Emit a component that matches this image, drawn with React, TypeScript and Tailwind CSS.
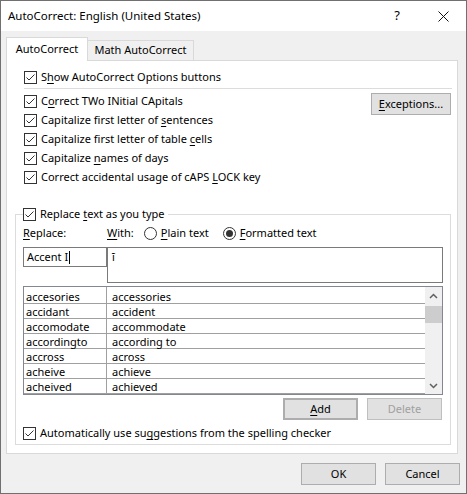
import React from 'react';

const rows = [
  ['accesories', 'accessories'],
  ['accidant', 'accident'],
  ['accomodate', 'accommodate'],
  ['accordingto', 'according to'],
  ['accross', 'across'],
  ['acheive', 'achieve'],
  ['acheived', 'achieved'],
];

function U({ children }: { children: React.ReactNode }) {
  return <span className="underline underline-offset-[2px] decoration-[1px]">{children}</span>;
}

function Check() {
  return (
    <span className="w-[13px] h-[13px] shrink-0 border border-[#333333] bg-white flex items-center justify-center">
      <svg width="11" height="11" viewBox="0 0 11 11">
        <path d="M1.5 5.5 L4 8 L9.5 2.5" fill="none" stroke="#333333" strokeWidth="1" />
      </svg>
    </span>
  );
}

function Radio({ on }: { on?: boolean }) {
  return (
    <span className="w-[13px] h-[13px] shrink-0 rounded-full border border-[#333333] bg-white flex items-center justify-center">
      {on && <span className="w-[7px] h-[7px] rounded-full bg-[#333333]" />}
    </span>
  );
}

function CheckRow({ children }: { children: React.ReactNode }) {
  return (
    <div className="flex items-center h-[19px] gap-[4px]">
      <Check />
      <span className="whitespace-nowrap">{children}</span>
    </div>
  );
}

function Btn({ children, className = '' }: { children: React.ReactNode; className?: string }) {
  return (
    <div className={`w-[75px] h-[22px] shrink-0 flex items-center justify-center bg-[#e1e1e1] border border-[#adadad] ${className}`}>
      {children}
    </div>
  );
}

export default function App() {
  return (
    <div className="w-[467px] h-[494px] border border-[#707070] flex flex-col font-['Noto_Sans',sans-serif] text-[11px] text-black overflow-hidden">
      {/* title bar */}
      <div className="h-[30px] shrink-0 bg-white flex items-center justify-between pl-[7px] pr-[17px]">
        <span className="text-[11.5px]">AutoCorrect: English (United States)</span>
        <div className="flex items-center gap-[38px]">
          <span className="text-[13px]">?</span>
          <svg width="11" height="11" viewBox="0 0 11 11">
            <path d="M0.5 0.5 L10.5 10.5 M10.5 0.5 L0.5 10.5" stroke="#111" strokeWidth="1" />
          </svg>
        </div>
      </div>

      {/* body */}
      <div className="flex-1 bg-[#f0f0f0] pl-[5px] pr-[6px] pt-[6px] flex flex-col">
        <div className="relative z-10 flex items-end h-[24px] -mb-px">
          <div className="w-[82px] h-[24px] bg-white border border-b-0 border-[#d9d9d9] flex items-center justify-center">
            AutoCorrect
          </div>
          <div className="w-[106px] h-[21px] border border-l-0 border-[#d9d9d9] flex items-center justify-center">
            Math AutoCorrect
          </div>
        </div>

        <div className="w-[452px] bg-white border border-[#d9d9d9] pt-[7px] pb-[8px] flex flex-col">
          <div className="pl-[17px]">
            <CheckRow>
              S<U>h</U>ow AutoCorrect Options buttons
            </CheckRow>
          </div>
          <div className="h-px bg-[#dcdcdc] mt-[1px] ml-[17px] mr-[5px]" />

          <div className="flex mt-[3px] pl-[17px] pr-[6px]">
            <div className="flex-1 flex flex-col">
              <CheckRow>
                C<U>o</U>rrect TWo INitial CApitals
              </CheckRow>
              <CheckRow>
                Capitalize first letter of <U>s</U>entences
              </CheckRow>
              <CheckRow>
                Capitalize first letter of table <U>c</U>ells
              </CheckRow>
              <CheckRow>
                Capitalize <U>n</U>ames of days
              </CheckRow>
              <CheckRow>
                Correct accidental usage of cAPS <U>L</U>OCK key
              </CheckRow>
            </div>
            <div className="w-[80px] h-[22px] mt-[1px] flex items-center justify-center bg-[#e1e1e1] border border-[#adadad]">
              <span>
                <U>E</U>xceptions...
              </span>
            </div>
          </div>

          {/* replace group */}
          <div className="relative mt-[27px] ml-[8px] mr-[6px] border border-[#dcdcdc] pt-[9px] pb-[1px] pl-[7px] pr-[7px] flex flex-col">
            <div className="absolute -top-[10px] left-[7px] bg-white pr-[3px]">
              <CheckRow>
                Replace <U>t</U>ext as you type
              </CheckRow>
            </div>

            <div className="flex items-center h-[19px]">
              <span className="w-[84px]">
                <U>R</U>eplace:
              </span>
              <span>
                <U>W</U>ith:
              </span>
              <span className="ml-[10px] flex items-center gap-[4px]">
                <Radio />
                <span>
                  <U>P</U>lain text
                </span>
              </span>
              <span className="ml-[14px] flex items-center gap-[4px]">
                <Radio on />
                <span>
                  <U>F</U>ormatted text
                </span>
              </span>
            </div>

            <div className="flex mt-[4px] items-start">
              <div className="w-[84px] h-[20px] border border-[#7a7a7a] flex items-center pl-[3px]">
                <span>Accent I</span>
                <span className="w-px h-[13px] bg-black ml-[1px]" />
              </div>
              <div className="flex-1 h-[36px] border border-[#7a7a7a] pl-[4px] pt-[1px] leading-[16px]">ĭ</div>
            </div>

            <div className="mt-[3px] h-[109px] border border-[#828790] flex">
              <div className="relative flex-1 pt-[2px]">
                <div className="absolute top-0 bottom-0 left-[82px] w-px bg-[#a0a0a0]" />
                {rows.map(([a, b]) => (
                  <div key={a} className="h-[15px] border-b border-[#a0a0a0] flex items-center leading-none">
                    <span className="w-[88px] pl-[2px]">{a}</span>
                    <span>{b}</span>
                  </div>
                ))}
              </div>
              <div className="w-[17px] bg-[#f0f0f0] flex flex-col">
                <div className="h-[17px] flex items-center justify-center">
                  <svg width="9" height="6" viewBox="0 0 9 6">
                    <path d="M1 5 L4.5 1.5 L8 5" fill="none" stroke="#606060" strokeWidth="1.5" />
                  </svg>
                </div>
                <div className="h-[17px] mt-[2px] bg-[#cdcdcd]" />
                <div className="flex-1" />
                <div className="h-[17px] flex items-center justify-center">
                  <svg width="9" height="6" viewBox="0 0 9 6">
                    <path d="M1 1 L4.5 4.5 L8 1" fill="none" stroke="#606060" strokeWidth="1.5" />
                  </svg>
                </div>
              </div>
            </div>

            <div className="flex justify-end gap-[9px] mt-[3px] pr-[1px]">
              <Btn className="border-2 border-[#0078d7]">
                <span>
                  <U>A</U>dd
                </span>
              </Btn>
              <Btn className="bg-[#cccccc] border-[#bfbfbf] text-[#a0a0a0]">Delete</Btn>
            </div>

            <div className="mt-[4px]">
              <CheckRow>
                Automatically use su<U>g</U>gestions from the spelling checker
              </CheckRow>
            </div>
          </div>
        </div>

        <div className="flex justify-end gap-[9px] mt-[9px]">
          <Btn>OK</Btn>
          <Btn>Cancel</Btn>
        </div>
      </div>
    </div>
  );
}
